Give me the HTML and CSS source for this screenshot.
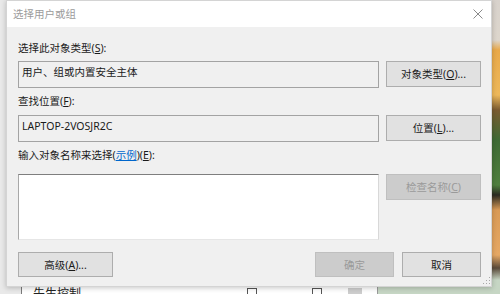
FILE: index.html
```html
<!DOCTYPE html>
<html lang="zh-CN">
<head>
<meta charset="utf-8">
<title>选择用户或组</title>
<link rel="stylesheet" href="styles.css">
</head>
<body>
<div class="desktop">
  <div class="photo"></div>
  <div class="under-window">
    <div class="under-row">
      <span class="under-cell under-name">先生控制</span>
      <span class="under-check c1"></span>
      <span class="under-check c2"></span>
      <span class="under-scroll"></span>
    </div>
  </div>

  <div class="dialog">
    <div class="titlebar">
      <span class="title">选择用户或组</span>
      <svg class="close" width="10" height="10" viewBox="0 0 10 10"><path d="M0.5 0.5L9.5 9.5M9.5 0.5L0.5 9.5" stroke="#8a8a8a" stroke-width="1" fill="none"/></svg>
    </div>
    <div class="content">
      <div class="label">选择此对象类型(<u>S</u>):</div>
      <div class="row row-1">
        <div class="field readonly">用户、组或内置安全主体</div>
        <div class="btn">对象类型(<u>O</u>)...</div>
      </div>
      <div class="label label-2">查找位置(<u>F</u>):</div>
      <div class="row row-2">
        <div class="field readonly">LAPTOP-2VOSJR2C</div>
        <div class="btn">位置(<u>L</u>)...</div>
      </div>
      <div class="label label-3">输入对象名称来选择(<span class="link">示例</span>)(<u>E</u>):</div>
      <div class="row row-3">
        <div class="field names"></div>
        <div class="btn disabled">检查名称(<u>C</u>)</div>
      </div>
      <div class="footer">
        <div class="btn btn-wide">高级(<u>A</u>)...</div>
        <div class="spacer"></div>
        <div class="btn btn-small disabled">确定</div>
        <div class="btn btn-small">取消</div>
      </div>
    </div>
    <svg class="grip" width="9" height="9" viewBox="0 0 9 9">
      <rect x="7" y="1" width="1" height="1" fill="#a8a8a8"/>
      <rect x="4" y="4" width="1" height="1" fill="#a8a8a8"/>
      <rect x="7" y="4" width="1" height="1" fill="#a8a8a8"/>
      <rect x="1" y="7" width="1" height="1" fill="#a8a8a8"/>
      <rect x="4" y="7" width="1" height="1" fill="#a8a8a8"/>
      <rect x="7" y="7" width="1" height="1" fill="#a8a8a8"/>
    </svg>
  </div>
</div>
</body>
</html>
```

FILE: styles.css
```css
* { box-sizing: border-box; }

html, body {
  margin: 0;
  padding: 0;
}

body {
  width: 500px;
  height: 294px;
  overflow: hidden;
  font-family: "Noto Sans", "Noto Sans CJK SC", sans-serif;
  font-size: 10.5px;
  color: #1a1a1a;
}

.desktop {
  position: relative;
  width: 500px;
  height: 294px;
  background: #c6d6c4;
  overflow: hidden;
}

.photo {
  position: absolute;
  left: 490px;
  top: 0;
  width: 10px;
  height: 294px;
  background: linear-gradient(to bottom,
    #d8d2cc 0px, #ddd6cc 40px,
    #e9a949 50px, #edb85a 95px,
    #7a5a30 110px, #3e6a34 140px, #4f7f3e 185px,
    #2a2a22 195px, #d99a55 210px, #e6a864 255px,
    #5a4a3a 268px, #c6d6c4 280px, #c6d6c4 294px);
}

.under-window {
  position: absolute;
  left: 0;
  top: 0;
  width: 378px;
  height: 294px;
  background: #e9e9e9;
  display: flex;
  flex-direction: column;
  justify-content: flex-end;
}

.under-row {
  position: relative;
  height: 8px;
  margin-left: 21px;
  background: #ffffff;
  border-left: 1px solid #7a7a7a;
  border-right: 1px solid #9a9a9a;
  overflow: hidden;
}

.under-name {
  position: absolute;
  left: 11px;
  top: 1px;
  font-size: 12px;
  line-height: 14px;
  color: #222;
}

.under-check {
  position: absolute;
  top: 2px;
  width: 10px;
  height: 10px;
  border: 1px solid #555;
  background: #fff;
}
.c1 { left: 225px; }
.c2 { left: 290px; }

.under-scroll {
  position: absolute;
  left: 326px;
  top: 2px;
  width: 14px;
  height: 10px;
  background: #cdcdcd;
}

.dialog {
  position: absolute;
  left: 6px;
  top: 0;
  width: 486px;
  height: 287px;
  background: #f0f0f0;
  border: 1px solid #d4d4d4;
  box-shadow: 0 1px 5px rgba(0, 0, 0, 0.22);
}

.titlebar {
  height: 26px;
  background: #ffffff;
  display: flex;
  align-items: center;
  justify-content: space-between;
  padding: 0 8px 0 6px;
}

.title {
  color: #9b9b9b;
  font-size: 10.5px;
  line-height: 14px;
}

.close {
  display: block;
  margin-top: -1px;
}

.content {
  display: flex;
  flex-direction: column;
  padding: 14px 10px 0 11px;
}

.label {
  line-height: 14px;
  height: 14px;
  white-space: nowrap;
}

.label-2 { margin-top: 6px; }
.label-3 { margin-top: 6px; }

.link {
  color: #0066cc;
  text-decoration: underline;
}

.row {
  display: flex;
  gap: 7px;
  align-items: flex-start;
}

.row-1 { margin-top: 6px; }
.row-2 { margin-top: 7px; }
.row-3 { margin-top: 12px; }

.field {
  flex: 1;
  height: 27px;
  padding: 3px 4px 0 3px;
  line-height: 14px;
  border: 1px solid #a3a3a3;
  white-space: nowrap;
}

.field.readonly {
  background: #f0f0f0;
}

.field.names {
  height: 66px;
  background: #ffffff;
  border-top-color: #7e7e7e;
  border-left-color: #a8a8a8;
  border-right-color: #d8d8d8;
  border-bottom-color: #e6e6e6;
}

.btn {
  width: 95px;
  height: 26px;
  flex: none;
  display: flex;
  align-items: center;
  justify-content: center;
  background: #e1e1e1;
  border: 1px solid #adadad;
  line-height: 14px;
  white-space: nowrap;
  color: #1a1a1a;
}

.btn.disabled {
  background: #cccccc;
  border-color: #bfbfbf;
  color: #9a9a9a;
}

.footer {
  display: flex;
  gap: 8px;
  margin-top: 12px;
}

.footer .btn {
  height: 25px;
}

.btn-small { width: 79px; }

.spacer { flex: 1; }

.grip {
  position: absolute;
  right: 0;
  bottom: 1px;
}
```
